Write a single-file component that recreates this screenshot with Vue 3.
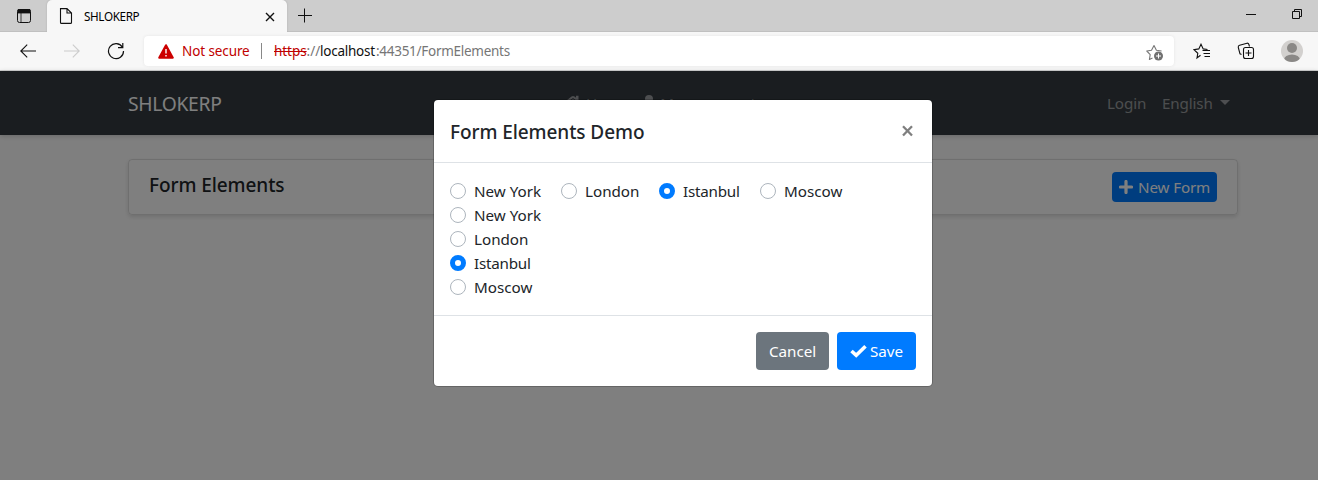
<script setup>
const cities = ['New York', 'London', 'Istanbul', 'Moscow']
const selected = 'Istanbul'
</script>

<template>
  <div class="window">
    <div class="tabstrip">
      <svg class="tab-actions" width="16" height="16" viewBox="0 0 16 16">
        <rect x="1.5" y="1.5" width="13" height="13" rx="2" fill="none" stroke="#111" />
        <path d="M2 1.500h12V5H2zM5 5v9" fill="#111" stroke="#111" stroke-width=".8" />
      </svg>
      <div class="tab">
        <svg class="page-icon" width="14" height="16" viewBox="0 0 14 16" fill="none" stroke="#111" stroke-width="1.1">
          <path d="M1.5 .6H8L12.5 5v9.400q0 1-1 1h-9q-1 0-1-1z M8 .6V5h4.500" />
        </svg>
        <span class="tab-title">SHLOKERP</span>
        <svg class="tab-close" width="10" height="10" viewBox="0 0 10 10" stroke="#111" stroke-width="1.4">
          <path d="M1 1l8 8M9 1l-8 8" />
        </svg>
      </div>
      <svg class="tab-new" width="16" height="16" viewBox="0 0 16 16" stroke="#111">
        <path d="M1 7.500h14M7.500 .500v14" />
      </svg>
      <div class="window-buttons">
        <svg width="10" height="10" viewBox="0 0 10 10" stroke="#111"><path d="M0 5.500h10" /></svg>
        <svg width="10" height="10" viewBox="0 0 10 10" fill="none" stroke="#111">
          <path d="M.5 2.500h7v7h-7z M2.500 2.500v-2h7v7h-2" />
        </svg>
      </div>
    </div>

    <div class="toolbar">
      <svg class="back" width="16" height="14" viewBox="0 0 16 14" fill="none" stroke="#111" stroke-width="1.1">
        <path d="M16 7H.8M7.200 .6L.8 7l6.400 6.400" />
      </svg>
      <svg class="forward" width="16" height="14" viewBox="0 0 16 14" fill="none" stroke="#ccc" stroke-width="1.1">
        <path d="M0 7h15.200M8.800 .6L15.200 7l-6.400 6.400" />
      </svg>
      <svg class="reload" width="18" height="18" viewBox="0 0 18 18" fill="none" stroke="#111" stroke-width="1.200">
        <path d="M15.400 5.200A7.500 7.500 0 1 0 16.500 9M15.800 1v4.700h-4.800" />
      </svg>
      <div class="address">
        <svg class="warning" width="16" height="15" viewBox="0 0 16 15">
          <path d="M8 1.200L14.800 13.700H1.200z" fill="#c00" stroke="#c00" stroke-width="2" stroke-linejoin="round" />
          <path d="M8 5v4.600M8 11v1.600" stroke="#fff" stroke-width="1.400" />
        </svg>
        <span class="not-secure">Not secure</span>
        <span class="divider"></span>
        <span class="url"><span class="scheme"><s>https</s>://</span><b class="host">localhost</b><span class="path">:44351/FormElements</span></span>
        <svg class="star-add" width="18" height="17" viewBox="0 0 18 17">
          <path d="M6.500 14L3.400 15.500 4.200 10.600.8 7l4.700-.7L8 1.500l2.400 4.800 5.200.7" fill="none" stroke="#777" stroke-width="1.100" stroke-linejoin="round" />
          <circle cx="12.500" cy="12" r="4.500" fill="#707070" />
          <path d="M10 12h5M12.500 9.500v5" stroke="#fff" />
        </svg>
      </div>
      <svg class="favorites" width="18" height="17" viewBox="0 0 18 17" fill="none" stroke="#111" stroke-width="1.100">
        <path d="M7.500 12.200L4 15l.8-4.700L1 6.700l4.800-.8L8 1.200l2.200 4.700 4.300.6M9.500 7.500H17M10.500 10.500H17M11.500 13.500H17" />
      </svg>
      <svg class="collections" width="18" height="18" viewBox="0 0 18 18" fill="none" stroke="#111" stroke-width="1.100">
        <path d="M4.500 12.600L3 11.800 1.300 5.500q-.4-1.800 1.300-2.300L10 1.200q1.400-.2 1.900 1.300l.6 2" />
        <rect x="6.500" y="5.500" width="10" height="11" rx="2" />
        <path d="M8.500 11h6M11.500 8v6" />
      </svg>
      <svg class="profile" width="22" height="22" viewBox="0 0 22 22">
        <defs><clipPath id="avatar"><circle cx="11" cy="11" r="11" /></clipPath></defs>
        <g clip-path="url(#avatar)">
          <rect width="22" height="22" fill="#d2d0ce" />
          <circle cx="11" cy="8" r="5" fill="#8a8886" />
          <ellipse cx="11" cy="20" rx="8" ry="5.500" fill="#8a8886" />
        </g>
      </svg>
    </div>

    <div class="page">
      <nav class="navbar">
        <span class="brand">SHLOKERP</span>
        <div class="menu">
          <span class="menu-item">
            <svg width="18" height="16" viewBox="0 0 18 16" fill="currentColor"><path d="M7.500 1.500Q9 .3 10.500 1.500L18 7.500 16.800 9 9 3 1.200 9 0 7.500zM12 .8h2.500v5L12 3.500zM3 9l6-5 6 5v6h-4v-4H7v4H3z" /></svg>
            Home
          </span>
          <span class="menu-item">
            <svg width="14" height="16" viewBox="0 0 14 16" fill="currentColor"><circle cx="7" cy="4" r="4" /><path d="M0 16v-3q0-4 4-4h6q4 0 4 4v3z" /></svg>
            Management
          </span>
        </div>
        <div class="account"><span class="login">Login</span><span class="language">English</span><i class="caret"></i></div>
      </nav>
      <section class="card">
        <h5 class="card-title">Form Elements</h5>
        <button class="new-form">
          <svg width="14" height="14" viewBox="0 0 14 14"><path d="M7 1.500v11M1.500 7h11" stroke="#fff" stroke-width="3.200" stroke-linecap="round" /></svg>
          <span>New Form</span>
        </button>
      </section>

      <div class="backdrop">
        <div class="modal">
          <header class="modal-header">
            <h5 class="modal-title">Form Elements Demo</h5>
            <svg class="close" width="11" height="12" viewBox="0 0 11 12" stroke="#7f7f7f" stroke-width="2.300"><path d="M1 1.300l9 9.200M10 1.300l-9 9.200" /></svg>
          </header>
          <div class="modal-body">
            <div class="inline-group">
              <div v-for="city in cities" :key="city" class="option" :class="city.split(' ')[0].toLowerCase()">
                <span class="radio" :class="{ checked: city === selected }"></span><span class="label">{{ city }}</span>
              </div>
            </div>
            <div v-for="city in cities" :key="city" class="option" :class="city.split(' ')[0].toLowerCase()">
              <span class="radio" :class="{ checked: city === selected }"></span><span class="label">{{ city }}</span>
            </div>
          </div>
          <footer class="modal-footer">
            <button class="btn cancel"><span>Cancel</span></button>
            <button class="btn save">
              <svg width="17" height="14" viewBox="0 0 17 14"><path d="M1.500 7l4.700 4.300L15.500 2.300" fill="none" stroke="#fff" stroke-width="3.600" /></svg>
              <span>Save</span>
            </button>
          </footer>
        </div>
      </div>
    </div>
  </div>
</template>

<style>
body { margin: 0; overflow: hidden; }
</style>

<style scoped>
* { box-sizing: border-box; }
svg { display: block; flex: none; }
span, h5 { white-space: nowrap; }
.window { width: 1318px; height: 480px; font-family: "Noto Sans", "Open Sans", sans-serif; font-size: 15.200px; overflow: hidden; }
.tabstrip { height: 32px; background: #cdcdcd; display: flex; align-items: flex-start; border-bottom: 1px solid #c0c0c0; }
.tab-actions { margin: 8px 15px 0 16px; }
.tab { width: 240px; height: 32px; background: #f7f7f7; border-radius: 5px 5px 0 0; display: flex; align-items: center; padding: 0 12px; box-shadow: 0 0 2px #aaa; clip-path: inset(-2px -3px 0 -3px); }
.tab-title { font-size: 11.700px; letter-spacing: -.36px; margin-left: 11px; line-height: 32px; }
.tab-close { margin: 1px 0 0 auto; }
.tab-new { margin: 8px 0 0 10px; }
.window-buttons { display: flex; gap: 36px; margin: 9px 16px 0 auto; }
.toolbar { height: 39px; background: #f7f7f7; border-bottom: 1px solid #cfd0d0; display: flex; align-items: center; padding-left: 20px; }
.forward { margin-left: 28px; }
.reload { margin-left: 27px; }
.address { width: 1030px; height: 30px; margin-left: 19px; background: #fff; border-radius: 4px; box-shadow: 0 0 3px #e3e3e3; display: flex; align-items: center; padding-left: 14px; font-size: 13.500px; }
.not-secure { color: #c00000; margin-left: 8px; width: 67px; letter-spacing: -.1px; }
.divider { width: 1px; height: 16px; background: #888; margin: 0 12px; }
.url { display: flex; color: #767676; }
.scheme { width: 46px; letter-spacing: -.05px; }
s { color: #c00000; }
.host { width: 56px; font-weight: 400; letter-spacing: -.25px; color: #111; }
.path { width: 134px; letter-spacing: -.28px; }
.star-add { margin: 2px 10px 0 auto; }
.favorites { margin-left: 19px; }
.collections { margin-left: 26px; }
.profile { margin-left: 26px; }
.page { position: relative; height: 409px; background: #fff; }
.navbar { height: 64px; background: #343a40; display: grid; grid-template-columns: 436px 1fr auto; align-items: center; padding: 0 88px 0 128px; color: rgba(255,255,255,.5); box-shadow: 0 1px 5px rgba(0,0,0,.2); }
.brand { color: #fff; font-size: 19.300px; letter-spacing: -.3px; padding-top: 1px; }
.menu { display: flex; gap: 13px; }
.menu-item { display: flex; align-items: center; gap: 4px; }
.account { display: flex; align-items: center; }
.login { width: 55px; letter-spacing: -.1px; }
.language { width: 58px; letter-spacing: -.15px; }
.caret { border: 5px solid transparent; border-top-color: currentColor; border-bottom: 0; margin-bottom: 2px; }
.card { width: 1110px; height: 56px; margin: 24px 0 0 128px; border: 1px solid rgba(0,0,0,.125); border-radius: 4px; box-shadow: 0 2px 4px rgba(0,0,0,.13); display: flex; justify-content: space-between; align-items: flex-start; padding: 12px 20px; color: #212529; }
h5 { margin: 0; font-weight: 500; font-size: 19px; letter-spacing: -.08px; line-height: 26px; color: #212529; }
.modal-title { margin-top: 2px; }
button { font: inherit; border: 0; color: #fff; display: flex; align-items: center; padding: 0; }
.new-form { width: 105px; height: 30px; border-radius: 4px; background: #007bff; padding-left: 7px; gap: 5px; letter-spacing: -.13px; }
.backdrop { position: absolute; inset: 0; background: rgba(0,0,0,.5); display: flex; justify-content: center; align-items: flex-start; padding: 29px 0 0 48px; }
.modal { width: 498px; height: 286px; background: #fff; border-radius: 4px; box-shadow: 0 0 0 1px rgba(0,0,0,.2); color: #212529; }
.modal-header { height: 63px; border-bottom: 1px solid #dee2e6; display: flex; justify-content: space-between; align-items: center; padding: 0 19px 0 16px; }
.modal-body { height: 152px; padding: 16px; }
.inline-group { display: flex; }
.option { height: 24px; display: flex; align-items: center; gap: 8px; }
.inline-group .new { width: 111px; }
.inline-group .london { width: 98px; }
.inline-group .istanbul { width: 101px; }
.istanbul .label { letter-spacing: -.22px; }
.radio { width: 16px; height: 16px; border: 1px solid #adb5bd; border-radius: 50%; }
.checked { border: 5px solid #007bff; }
.modal-footer { height: 71px; border-top: 1px solid #dee2e6; display: flex; justify-content: flex-end; gap: 8px; padding: 16px; }
.btn { height: 38px; border-radius: 4px; }
.cancel { width: 73px; background: #6c757d; padding-left: 13px; }
.save { width: 79px; background: #007bff; padding-left: 13px; gap: 3px; }
</style>
